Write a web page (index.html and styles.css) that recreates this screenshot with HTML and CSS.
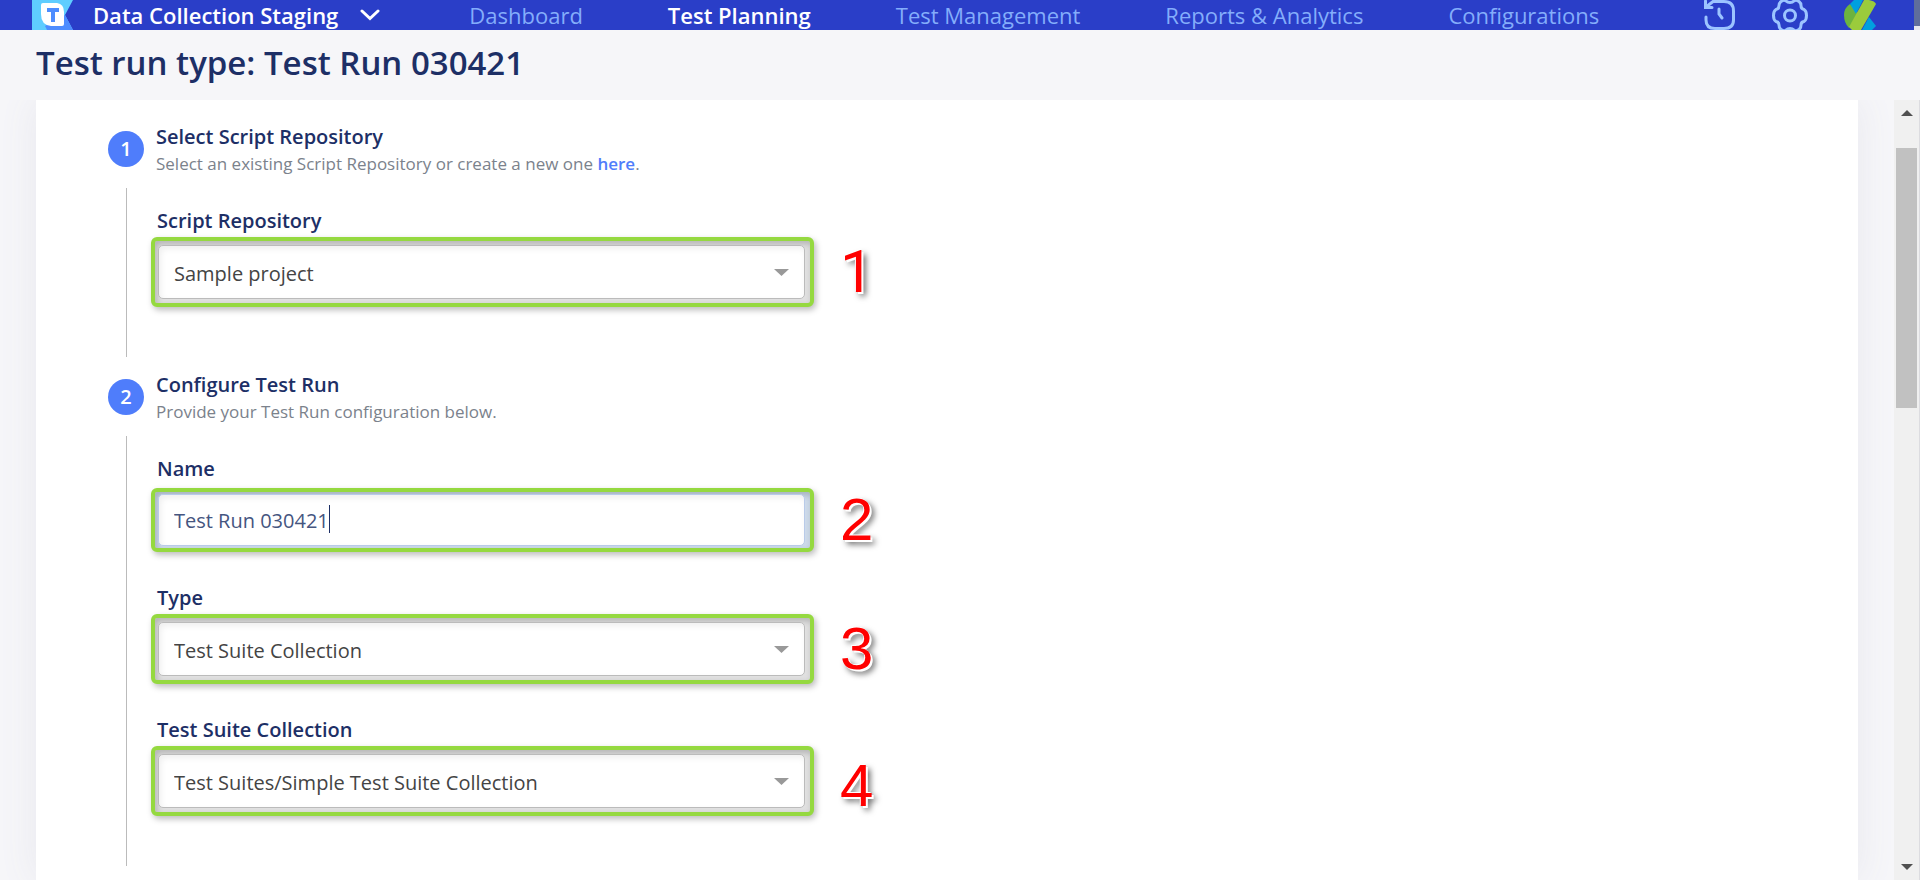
FILE: index.html
```html
<!DOCTYPE html>
<html lang="en">
<head>
<meta charset="utf-8">
<title>Test Run 030421</title>
<link rel="stylesheet" href="styles.css">
</head>
<body>
<header class="topbar">
  <a class="logo" href="#" aria-label="Home">
    <svg width="42" height="30" viewBox="0 0 42 30">
      <path d="M0 0H41L33 15L41 30H0Z" fill="#5fcdff"/>
      <path d="M13 26L33 15L41 30H15Z" fill="#4d8dff"/>
      <path d="M9 5Q9 3 11 3H25Q32 4 32 12V24Q32 26 30 26H19Q9 25 9 14Z" fill="#fff"/>
      <path d="M15 8H27V12H23V22H19V12H15Z" fill="#4d8dff"/>
    </svg>
  </a>
  <button class="project" type="button">Data Collection Staging
    <svg width="20" height="12" viewBox="0 0 20 12" fill="none" stroke="#fff" stroke-width="3" stroke-linecap="round"><path d="M2 2L10 9.500L18 2"/></svg>
  </button>
  <nav class="nav">
    <a href="#">Dashboard</a>
    <a class="active" href="#">Test Planning</a>
    <a href="#">Test Management</a>
    <a href="#">Reports &amp; Analytics</a>
    <a href="#">Configurations</a>
  </nav>
  <div class="tools">
    <button type="button" aria-label="History">
      <svg width="32" height="30" viewBox="0 0 32 30" fill="none" stroke="#9cc4ff" stroke-width="3" stroke-linecap="round"><path d="M2 17V20Q2 28.500 11 28.500H20Q29.500 28.500 29.500 20V11Q29.500 1.500 20 1.500H9L2 7M1.500 1V7.500H8M15 9V14L18 18"/></svg>
    </button>
    <button type="button" aria-label="Settings">
      <svg width="36" height="30" viewBox="0 0 36 30" fill="none" stroke="#9cc4ff" stroke-width="3"><circle cx="18" cy="15.500" r="5.500"/><path d="M18 2.500Q20.500 2.500 22 1Q24 -1 27 1.500Q29 3 29 5.500Q29 9 32 9.500Q34.500 11 34.500 15.500Q34.500 20 32 21.500Q29 22 29 25Q29 28 27 29.500Q24 32 22 30Q20.500 28.500 18 28.500Q15.500 28.500 14 30Q12 32 9 29.500Q7 28 7 25Q7 22 4 21.500Q1.500 20 1.500 15.500Q1.500 11 4 9.500Q7 9 7 5.500Q7 3 9 1.500Q12 -1 14 1Q15.500 2.500 18 2.500Z"/></svg>
    </button>
    <button type="button" aria-label="Account">
      <svg width="32" height="30" viewBox="0 0 32 30"><path d="M6 4Q0 8 0 15Q0 23 5 28L14 13Z" fill="#6cb33f"/><path d="M6 4L10 0H19L12 14Z" fill="#00a0df"/><path d="M25 17L32 26L28 30H18Z" fill="#00a0df"/><path d="M25 0Q31 1 32 4L17 30H8L5 27L20 0Z" fill="#9bcb3c"/></svg>
    </button>
  </div>
  <div class="page-thumb"></div>
</header>
<h1 class="title">Test run type: Test Run 030421</h1>
<div class="body">
  <main class="card">
    <section class="step">
      <span class="badge">1</span>
      <div class="head">
        <h2>Select Script Repository</h2>
        <p>Select an existing Script Repository or create a new one <a href="#">here</a>.</p>
      </div>
      <div class="fields">
        <label for="repo">Script Repository</label>
        <div class="row"><div class="frame pick"><select id="repo"><option>Sample project</option></select></div><span class="mark plain">1</span></div>
      </div>
    </section>
    <section class="step">
      <span class="badge">2</span>
      <div class="head">
        <h2>Configure Test Run</h2>
        <p>Provide your Test Run configuration below.</p>
      </div>
      <div class="fields">
        <label for="name">Name</label>
        <div class="row spaced"><div class="frame focus"><input id="name" type="text" value="Test Run 030421"><span class="caret"></span></div><span class="mark">2</span></div>
        <label for="type">Type</label>
        <div class="row"><div class="frame pick"><select id="type"><option>Test Suite Collection</option></select></div><span class="mark">3</span></div>
        <label for="suite">Test Suite Collection</label>
        <div class="row"><div class="frame pick"><select id="suite"><option>Test Suites/Simple Test Suite Collection</option></select></div><span class="mark low">4</span></div>
      </div>
    </section>
  </main>
  <div class="scrollbar">
    <button class="up" type="button" aria-label="Scroll up"><svg width="12" height="6"><path d="M0 6L6 0L12 6Z" fill="#505050"/></svg></button>
    <div class="thumb"></div>
    <button class="down" type="button" aria-label="Scroll down"><svg width="12" height="6"><path d="M0 0L6 6L12 0Z" fill="#505050"/></svg></button>
  </div>
</div>
</body>
</html>
```
FILE: styles.css
```css
* { box-sizing: border-box; margin: 0; }
body { min-height: 100vh; display: flex; flex-direction: column; background: #f6f6f9; font-family: "Open Sans", "Noto Sans", sans-serif; color: #1d2f66; }
button { border: 0; padding: 0; background: none; font: inherit; color: inherit; }
svg { display: block; }
.topbar { display: flex; align-items: center; height: 30px; padding-left: 32px; background: #2a3ec8; overflow: hidden; }
.logo { margin-right: 19px; }
.project { display: flex; align-items: center; gap: 22px; font-size: 22px; font-weight: 600; color: #fff; white-space: nowrap; }
.nav { display: flex; gap: 85px; margin-left: 89px; font-size: 22px; white-space: nowrap; }
.nav a { color: #84adfb; text-decoration: none; }
.nav .active { color: #fff; font-weight: 600; }
.tools { display: flex; gap: 36px; margin-left: auto; padding-right: 38px; }
.page-thumb { align-self: stretch; width: 6px; border-bottom: 4px solid #e6e6ee; background: #5f6d9c; }
.title { height: 70px; padding-left: 36px; font-size: 33px; line-height: 66px; font-weight: 600; }
.body { flex: 1; display: flex; padding-left: 36px; }
.card { flex: 1; margin-right: 36px; padding: 22px 72px 0; background: #fff; box-shadow: 0 0 36px #e8e8ee; clip-path: inset(0 -36px); }
.step { display: grid; grid-template-columns: 36px 1fr; column-gap: 12px; }
.step + .step { margin-top: 13px; }
.badge { align-self: center; width: 36px; height: 36px; border-radius: 50%; background: #4f7dfb; color: #fff; font-size: 20px; line-height: 36px; font-weight: 600; text-align: center; }
.head { height: 54px; }
h2 { font-size: 20px; line-height: 30px; font-weight: 600; }
p { font-size: 17px; line-height: 23px; color: #7b828c; }
p a { color: #4f7dfb; font-weight: 600; text-decoration: none; }
.fields { grid-column: 1 / -1; margin: 12px 0 0 18px; padding: 18px 0 50px 24px; border-left: 1px solid #bbb; }
label { display: block; padding-left: 6px; font-size: 20px; line-height: 30px; font-weight: 600; }
.row { display: flex; align-items: center; margin-top: 1px; }
.row.spaced { margin-top: 4px; }
.row + label { margin-top: 31px; }
.frame { position: relative; width: 663px; border: 4px solid #95d940; border-radius: 6px; padding: 4px 5px 4px 3px; background: #e0e0e0; box-shadow: 2px 3px 6px #0004, inset 2px 3px 6px #0003; }
.frame.focus { background: #cddaea; padding: 2px 5px 2px 3px; }
.pick::after { content: ""; position: absolute; right: 21px; top: 28px; width: 15px; height: 7px; background: #999; clip-path: polygon(0 0, 100% 0, 50% 100%); pointer-events: none; }
select, input { display: block; appearance: none; width: 100%; height: 54px; padding: 2px 15px 0; border: 1px solid #bbb; border-radius: 5px; outline: 0; background: #fff; box-shadow: inset 2px 3px 6px #0001; font: 20px "Open Sans", "Noto Sans", sans-serif; color: #444; }
input { height: 52px; padding-top: 0; border-color: #b9cbe9; color: #45557f; }
.caret { position: absolute; left: 174px; top: 13px; width: 1px; height: 28px; background: #1d2f66; }
.mark { margin-left: 26px; font: 60px/60px "Liberation Sans", Arial, sans-serif; color: red; text-shadow: -1px -1px 0 #fff, 2px 2px 0 #fff, 4px 4px 6px #000a; }
.mark.plain { font-family: Roboto, sans-serif; }
.mark.low { align-self: flex-end; }
.scrollbar { width: 26px; display: flex; flex-direction: column; align-items: center; border-right: 1px solid #dcdce0; background: #f0f0f0; }
.thumb { width: 21px; height: 260px; background: #c1c1c1; }
.up, .down { display: flex; justify-content: center; width: 25px; height: 48px; padding: 10px 0; }
.down { align-items: flex-end; margin-top: auto; }
```
